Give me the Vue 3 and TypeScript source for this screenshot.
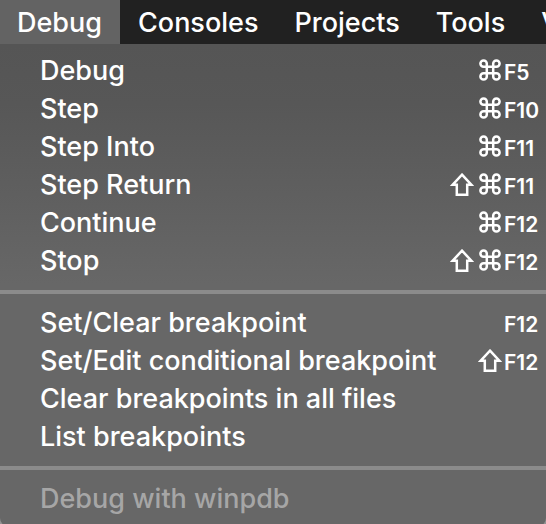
<script setup lang="ts">
interface MenuEntry {
  label: string
  key?: string
  command?: boolean
  shift?: boolean
  disabled?: boolean
}

const titles: string[] = ['Debug', 'Consoles', 'Projects', 'Tools', 'View']

const groups: MenuEntry[][] = [
  [
    { label: 'Debug', key: 'F5', command: true },
    { label: 'Step', key: 'F10', command: true },
    { label: 'Step Into', key: 'F11', command: true },
    { label: 'Step Return', key: 'F11', command: true, shift: true },
    { label: 'Continue', key: 'F12', command: true },
    { label: 'Stop', key: 'F12', command: true, shift: true },
  ],
  [
    { label: 'Set/Clear breakpoint', key: 'F12' },
    { label: 'Set/Edit conditional breakpoint', key: 'F12', shift: true },
    { label: 'Clear breakpoints in all files' },
    { label: 'List breakpoints' },
  ],
  [{ label: 'Debug with winpdb', disabled: true }],
]
</script>

<template>
  <div class="screen">
    <nav class="menubar" aria-label="Application menu">
      <button
        v-for="(title, i) in titles"
        :key="title"
        type="button"
        class="title"
        :class="{ open: i === 0 }"
        aria-haspopup="menu"
        :aria-expanded="i === 0"
      >{{ title }}</button>
    </nav>
    <div class="menu" role="menu" aria-label="Debug">
      <div v-for="(group, g) in groups" :key="g" class="group" role="group">
        <button
          v-for="entry in group"
          :key="entry.label"
          type="button"
          role="menuitem"
          class="entry"
          :disabled="entry.disabled"
        >
          <span class="label">{{ entry.label }}</span>
          <span v-if="entry.key" class="shortcut">
            <svg v-if="entry.shift" class="modifier" viewBox="0 0 24 24" role="img" aria-label="Shift">
              <path d="M12 1.7 L21.5 11.8 H17.2 V21.8 H6.8 V11.8 H2.5 Z" />
            </svg>
            <svg v-if="entry.command" class="modifier" viewBox="0 0 24 24" role="img" aria-label="Command">
              <path
                d="M8.8 7.8 H15.2 V14.2 H8.8 Z M8.8 7.8 H5.6 A3.2 3.2 0 1 1 8.8 4.6 Z M15.2 7.8 V4.6 A3.2 3.2 0 1 1 18.4 7.8 Z M15.2 14.2 H18.4 A3.2 3.2 0 1 1 15.2 17.4 Z M8.8 14.2 V17.4 A3.2 3.2 0 1 1 5.6 14.2 Z"
              />
            </svg>
            <span class="key">{{ entry.key }}</span>
          </span>
        </button>
      </div>
    </div>
  </div>
</template>

<style>
body {
  overflow: hidden;
  background: #929292;
}
</style>

<style scoped>
.screen {
  font-family: Inter, Roboto, "Liberation Sans", sans-serif;
  font-size: 27px;
  font-weight: 500;
  color: #fff;
}

button {
  margin: 0;
  border: 0;
  background: none;
  color: inherit;
  font: inherit;
  text-align: left;
  white-space: nowrap;
}

.menubar {
  display: flex;
  height: 44px;
  margin-left: -1px;
  overflow: hidden;
  background: #212121;
}

.title {
  flex: none;
  padding: 2px 18px 0;
  line-height: 42px;
}

.title.open {
  background: #636363;
}

.menu {
  padding: 8px 0;
  border-radius: 0 0 8px 8px;
  background: linear-gradient(#555 0, #575757 60px, #676767 240px, #676767 100%);
}

.group + .group {
  margin-top: 10px;
  padding-top: 10px;
  border-top: 4px solid #8b8b8b;
}

.entry {
  display: flex;
  align-items: center;
  justify-content: space-between;
  width: 100%;
  height: 38px;
  padding: 0 0 0 40px;
  line-height: 38px;
}

.entry:disabled {
  color: #a6a6a6;
}

.shortcut {
  display: flex;
  align-items: center;
  gap: 4px;
}

.modifier {
  width: 24px;
  height: 24px;
  margin-right: -2px;
  fill: none;
  stroke: #fff;
  stroke-width: 2.5;
}

.modifier + .modifier {
  margin-left: 2px;
}

.key {
  width: 42px;
  padding-top: 4px;
  font-size: 21px;
  font-weight: 600;
  line-height: 34px;
}
</style>
